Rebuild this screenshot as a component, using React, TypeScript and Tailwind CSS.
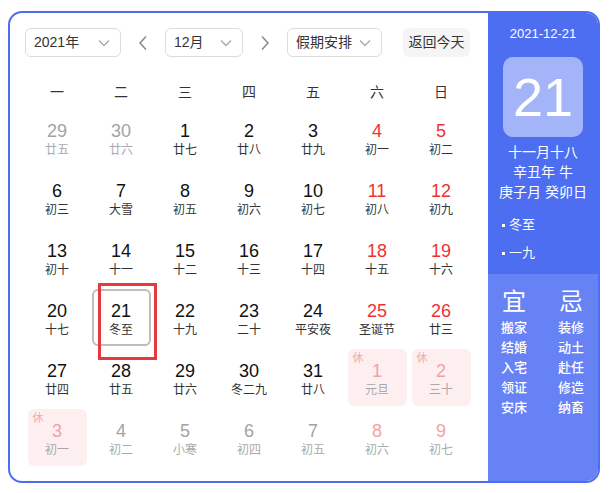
import * as React from "react";

type Day = {
  n: number;
  lunar: string;
  muted?: boolean;
  red?: boolean;
  rest?: boolean;
  selected?: boolean;
};

const weeks: Day[][] = [
  [
    { n: 29, lunar: "廿五", muted: true },
    { n: 30, lunar: "廿六", muted: true },
    { n: 1, lunar: "廿七" },
    { n: 2, lunar: "廿八" },
    { n: 3, lunar: "廿九" },
    { n: 4, lunar: "初一", red: true },
    { n: 5, lunar: "初二", red: true },
  ],
  [
    { n: 6, lunar: "初三" },
    { n: 7, lunar: "大雪" },
    { n: 8, lunar: "初五" },
    { n: 9, lunar: "初六" },
    { n: 10, lunar: "初七" },
    { n: 11, lunar: "初八", red: true },
    { n: 12, lunar: "初九", red: true },
  ],
  [
    { n: 13, lunar: "初十" },
    { n: 14, lunar: "十一" },
    { n: 15, lunar: "十二" },
    { n: 16, lunar: "十三" },
    { n: 17, lunar: "十四" },
    { n: 18, lunar: "十五", red: true },
    { n: 19, lunar: "十六", red: true },
  ],
  [
    { n: 20, lunar: "十七" },
    { n: 21, lunar: "冬至", selected: true },
    { n: 22, lunar: "十九" },
    { n: 23, lunar: "二十" },
    { n: 24, lunar: "平安夜" },
    { n: 25, lunar: "圣诞节", red: true },
    { n: 26, lunar: "廿三", red: true },
  ],
  [
    { n: 27, lunar: "廿四" },
    { n: 28, lunar: "廿五" },
    { n: 29, lunar: "廿六" },
    { n: 30, lunar: "冬二九" },
    { n: 31, lunar: "廿八" },
    { n: 1, lunar: "元旦", rest: true },
    { n: 2, lunar: "三十", rest: true },
  ],
  [
    { n: 3, lunar: "初一", rest: true, muted: true },
    { n: 4, lunar: "初二", muted: true },
    { n: 5, lunar: "小寒", muted: true },
    { n: 6, lunar: "初四", muted: true },
    { n: 7, lunar: "初五", muted: true },
    { n: 8, lunar: "初六", muted: true, red: true },
    { n: 9, lunar: "初七", muted: true, red: true },
  ],
];

const weekdays = ["一", "二", "三", "四", "五", "六", "日"];
const yi = ["搬家", "结婚", "入宅", "领证", "安床"];
const ji = ["装修", "动土", "赴任", "修造", "纳畜"];

function Chevron({ dir }: { dir: "down" | "left" | "right" }) {
  if (dir === "down") {
    return (
      <svg width="12" height="8" viewBox="0 0 12 8" fill="none">
        <polyline points="1,1.5 6,6.5 11,1.5" stroke="#a8a8a8" strokeWidth="1.3" />
      </svg>
    );
  }
  return (
    <svg width="10" height="16" viewBox="0 0 10 16" fill="none">
      <polyline
        points={dir === "left" ? "8,1.5 2,8 8,14.5" : "2,1.5 8,8 2,14.5"}
        stroke="#8a8a8a"
        strokeWidth="1.5"
      />
    </svg>
  );
}

function Select({ label, width }: { label: string; width: string }) {
  return (
    <div
      className={`${width} h-[29px] flex items-center justify-between pl-[8px] pr-[10px] border border-[#dcdcdc] rounded-[6px] text-[14px] text-[#333]`}
    >
      <span>{label}</span>
      <Chevron dir="down" />
    </div>
  );
}

function Cell({ d }: { d: Day }) {
  let numColor = "text-[#111]";
  let lunarColor = "text-[#333]";
  if (d.red) numColor = "text-[#ee3232]";
  if (d.muted) {
    numColor = d.red ? "text-[#f1a3a3]" : "text-[#a3a3a3]";
    lunarColor = "text-[#aaaaaa]";
  }
  if (d.rest) {
    numColor = "text-[#f0a2a6]";
    lunarColor = "text-[#a9a9a9]";
  }
  return (
    <div className="relative h-[60px]">
      <div
        className={`relative mx-auto mt-[1px] w-[59px] h-[57px] flex flex-col items-center pt-[12px] rounded-[6px] ${
          d.rest ? "bg-[#fdeff0]" : ""
        } ${d.selected ? "border-2 border-[#bdbdbd]" : ""}`}
      >
        {d.rest && (
          <span className="absolute left-[5px] top-[3px] text-[11px] leading-[12px] text-[#f3a9ad]">
            休
          </span>
        )}
        <div className={`text-[18px] leading-[20px] ${numColor} ${d.selected ? "-mt-[2px]" : ""}`}>
          {d.n}
        </div>
        <div className={`mt-[1px] text-[12px] leading-[16px] ${lunarColor}`}>{d.lunar}</div>
      </div>
      {d.selected && (
        <div className="absolute left-[9px] -top-[5px] w-[59px] h-[77px] border-[3px] border-[#e8383d] z-10" />
      )}
    </div>
  );
}

function Term({ label }: { label: string }) {
  return (
    <div className="flex items-center">
      <span className="w-[3px] h-[3px] bg-white mr-[4px]" />
      <span>{label}</span>
    </div>
  );
}

export default function App() {
  return (
    <div className="w-[610px] h-[493px] bg-white pt-[11px] pl-[8px] font-['Liberation_Sans','Noto_Sans_CJK_SC',sans-serif]">
      <div className="w-[592px] h-[472px] flex rounded-[14px] border-2 border-[#4e6ef2] overflow-hidden">
        {/* calendar */}
        <div className="w-[478px] pl-[15px] pr-[15px] pt-[15px]">
          <div className="flex items-center">
            <Select label="2021年" width="w-[96px]" />
            <div className="w-[44px] flex justify-center">
              <Chevron dir="left" />
            </div>
            <Select label="12月" width="w-[78px]" />
            <div className="w-[44px] flex justify-center">
              <Chevron dir="right" />
            </div>
            <Select label="假期安排" width="w-[95px]" />
            <div className="ml-[21px] w-[67px] h-[29px] flex items-center justify-center rounded-[6px] bg-[#f5f5f6] text-[14px] text-[#333]">
              返回今天
            </div>
          </div>
          <div className="mt-[19px] grid grid-cols-7 h-[32px] items-center text-[14px] text-[#333]">
            {weekdays.map((w) => (
              <div key={w} className="text-center">
                {w}
              </div>
            ))}
          </div>
          <div className="grid grid-cols-7">
            {weeks.flat().map((d, i) => (
              <Cell key={i} d={d} />
            ))}
          </div>
        </div>

        {/* side panel */}
        <div className="flex-1 flex flex-col text-white">
          <div className="bg-[#4e6ef2] h-[261px] flex flex-col items-center pt-[12px]">
            <div className="text-[13px] leading-[18px]">2021-12-21</div>
            <div className="mt-[14px] w-[80px] h-[80px] rounded-[10px] bg-[#a4b4f8] flex items-center justify-center text-[54px] leading-none">
              21
            </div>
            <div className="mt-[5px] text-[14px] leading-[20px] text-center">
              <div>十一月十八</div>
              <div>辛丑年 牛</div>
              <div>庚子月 癸卯日</div>
            </div>
            <div className="self-start pl-[14px] mt-[14px] text-[13px] leading-[18px] flex flex-col gap-[10px]">
              <Term label="冬至" />
              <Term label="一九" />
            </div>
          </div>
          <div className="flex-1 bg-[#6682f5] flex justify-center gap-[31px] pt-[13px] pr-[1px]">
            <div className="flex flex-col items-center">
              <div className="text-[24px] leading-[30px]">宜</div>
              <div className="mt-[1px] text-[13px] leading-[20px] font-medium">
                {yi.map((t) => (
                  <div key={t}>{t}</div>
                ))}
              </div>
            </div>
            <div className="flex flex-col items-center">
              <div className="text-[24px] leading-[30px]">忌</div>
              <div className="mt-[1px] text-[13px] leading-[20px] font-medium">
                {ji.map((t) => (
                  <div key={t}>{t}</div>
                ))}
              </div>
            </div>
          </div>
        </div>
      </div>
    </div>
  );
}
